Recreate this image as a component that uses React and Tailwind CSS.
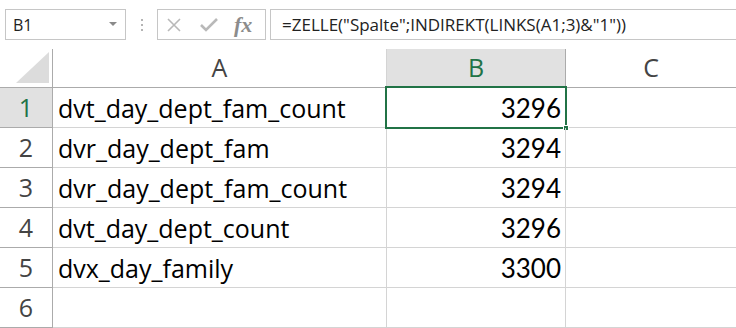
import React from "react";

const rows = [
  { n: 1, a: "dvt_day_dept_fam_count", b: "3296" },
  { n: 2, a: "dvr_day_dept_fam", b: "3294" },
  { n: 3, a: "dvr_day_dept_fam_count", b: "3294" },
  { n: 4, a: "dvt_day_dept_count", b: "3296" },
  { n: 5, a: "dvx_day_family", b: "3300" },
  { n: 6, a: "", b: "" },
];

const uiFont = { fontFamily: '"Open Sans", "Noto Sans", sans-serif' };
const cellFont = { fontFamily: 'Lato, "Open Sans", sans-serif' };
const textFont = { fontFamily: '"Open Sans", "Noto Sans", sans-serif' };

const FormulaBar = () => (
  <div className="flex h-[49px] items-start bg-white pt-[9px]" style={uiFont}>
    {/* name box */}
    <div className="ml-[5px] flex h-[31px] w-[121px] items-center justify-between border border-[#c6c6c6] pl-[7px] pr-[8px] text-[16px] text-[#222]">
      <span>B1</span>
      <svg width="8" height="5" viewBox="0 0 8 5">
        <path d="M0 0 L8 0 L4 4 Z" fill="#8a8a8a" />
      </svg>
    </div>
    {/* dots */}
    <div className="flex h-[31px] w-[31px] flex-col items-center justify-center gap-[3px]">
      <span className="h-[2px] w-[2px] bg-[#b4b4b4]" />
      <span className="h-[2px] w-[2px] bg-[#b4b4b4]" />
      <span className="h-[2px] w-[2px] bg-[#b4b4b4]" />
    </div>
    {/* buttons */}
    <div className="flex h-[31px] w-[109px] items-center border border-[#c6c6c6] pl-[9px]">
      <svg width="14" height="14" viewBox="0 0 14 14">
        <path d="M1 1 L13 13 M13 1 L1 13" stroke="#b9b9b9" strokeWidth="1.6" />
      </svg>
      <svg className="ml-[19px]" width="18" height="14" viewBox="0 0 18 14">
        <path d="M1 7 L6 12 L17 1" stroke="#b9b9b9" strokeWidth="2.6" fill="none" />
      </svg>
      <span
        className="ml-[16px] text-[22px] font-bold italic leading-none text-[#8c8c8c]"
        style={{ fontFamily: '"Liberation Serif", serif' }}
      >
        fx
      </span>
    </div>
    {/* formula */}
    <div className="ml-[4px] flex h-[31px] flex-1 items-center border-y border-l border-[#c6c6c6] pl-[11px] text-[17px] text-[#222]">
      =ZELLE("Spalte";INDIREKT(LINKS(A1;3)&"1"))
    </div>
  </div>
);

const App = () => {
  return (
    <div className="h-[328px] w-[736px] overflow-hidden bg-white">
      <FormulaBar />
      {/* column headers */}
      <div className="flex h-[39px] border-b border-[#ababab]">
        <div className="flex w-[53px] items-end justify-end border-r border-[#ababab] pb-[4px] pr-[3px]">
          <svg width="33" height="31" viewBox="0 0 33 31">
            <path d="M33 0 L33 31 L0 31 Z" fill="#dcdcdc" />
          </svg>
        </div>
        <div className="flex w-[334px] items-center justify-center border-r border-[#d4d4d4] text-[25px] text-[#444]" style={uiFont}>
          A
        </div>
        <div className="flex w-[179px] items-center justify-center border-r border-[#ababab] bg-[#e1e1e1] text-[25px] text-[#217346]" style={uiFont}>
          B
        </div>
        <div className="flex flex-1 items-center justify-center text-[25px] text-[#444]" style={uiFont}>
          C
        </div>
      </div>
      {/* rows */}
      {rows.map((r) => (
        <div key={r.n} className="flex h-[40px]">
          <div
            className={`flex w-[53px] items-center justify-center border-b border-r border-[#ababab] text-[25px] ${
              r.n === 1 ? "bg-[#e1e1e1] text-[#217346]" : "bg-white text-[#444]"
            }`}
            style={uiFont}
          >
            {r.n}
          </div>
          <div className="flex w-[334px] items-center border-b border-r border-[#d4d4d4] pl-[5px] pt-[2px] text-[25px] text-black" style={textFont}>
            {r.a}
          </div>
          <div className="relative flex w-[179px] items-center justify-end border-b border-r border-[#d4d4d4] pr-[4px] pt-[2px] text-[26px] text-black" style={cellFont}>
            {r.b}
            {r.n === 1 && (
              <>
                <div className="absolute left-[-2px] top-[-2px] h-[43px] w-[182px] border-2 border-[#217346]" />
                <div className="absolute bottom-[-4px] right-[-4px] h-[6px] w-[6px] border border-white bg-[#217346]" />
              </>
            )}
          </div>
          <div className="flex-1 border-b border-[#d4d4d4]" />
        </div>
      ))}
    </div>
  );
};

export default App;
